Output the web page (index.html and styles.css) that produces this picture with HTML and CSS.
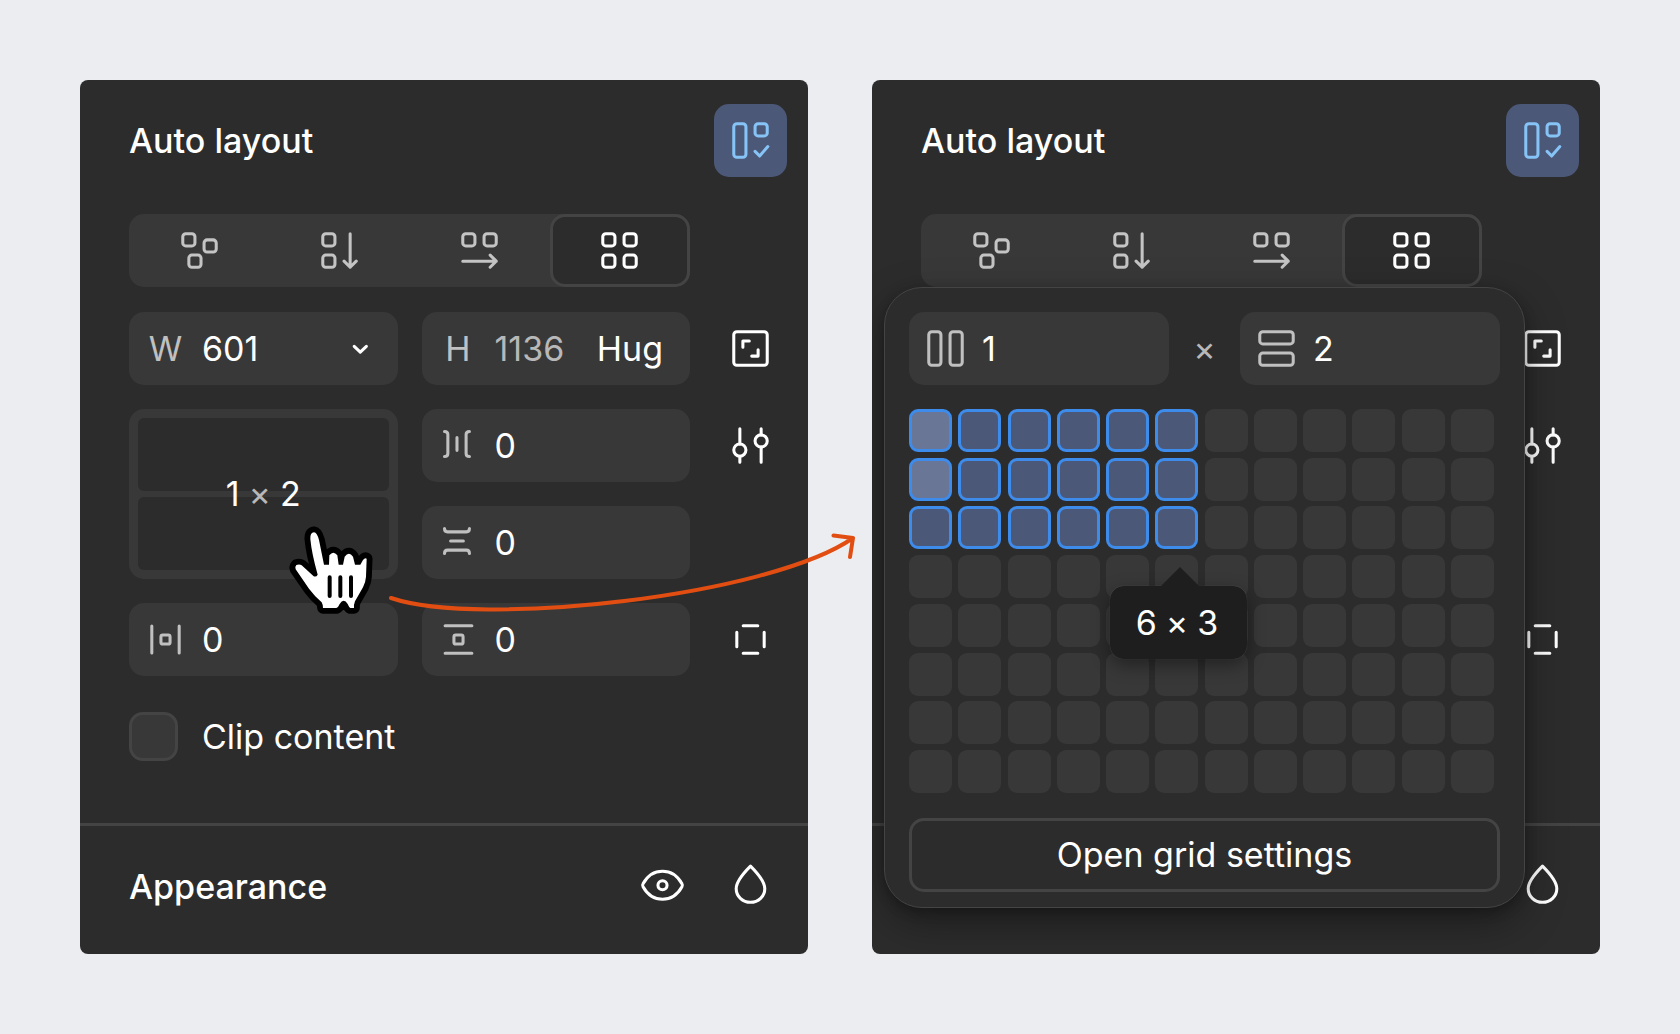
FILE: index.html
```html
<!DOCTYPE html>
<html lang="en">
<head>
    <meta charset="UTF-8">
    <meta name="viewport" content="width=device-width, initial-scale=1.0">
    <title>Auto layout</title>
    <link rel="stylesheet" href="styles.css">
</head>
<body>
    <svg class="sprite" aria-hidden="true">
        <symbol id="i-auto" viewBox="0 0 24 24"><rect x="6.5" y="6.5" width="4" height="11" rx="1"/><rect x="13.5" y="6.5" width="4" height="4" rx="1"/><path d="M13.5 15.6l1.5 1.5 2.7-3.1"/></symbol>
        <symbol id="i-free" viewBox="0 0 24 24"><rect x="6.5" y="6.5" width="4" height="4" rx="1"/><rect x="13.5" y="8.5" width="4" height="4" rx="1"/><rect x="8.5" y="13.5" width="4" height="4" rx="1"/></symbol>
        <symbol id="i-down" viewBox="0 0 24 24"><rect x="6.5" y="6.5" width="4" height="4" rx="1"/><rect x="6.5" y="13.5" width="4" height="4" rx="1"/><path d="M15.5 6.5v11M13.5 15.5l2 2 2-2"/></symbol>
        <symbol id="i-right" viewBox="0 0 24 24"><rect x="6.5" y="6.5" width="4" height="4" rx="1"/><rect x="13.5" y="6.5" width="4" height="4" rx="1"/><path d="M6.5 15.5h11M15.5 13.5l2 2-2 2"/></symbol>
        <symbol id="i-grid" viewBox="0 0 24 24"><rect x="6.5" y="6.5" width="4" height="4" rx="1"/><rect x="13.5" y="6.5" width="4" height="4" rx="1"/><rect x="6.5" y="13.5" width="4" height="4" rx="1"/><rect x="13.5" y="13.5" width="4" height="4" rx="1"/></symbol>
        <symbol id="i-chevron" viewBox="0 0 24 24"><path d="M9.6 11.3l2 1.9 2-1.9"/></symbol>
        <symbol id="i-ratio" viewBox="0 0 24 24"><rect x="6.5" y="6.5" width="11" height="11" rx="1"/><path d="M9.5 11.6V9.5h2.1M14.5 12.4v2.1h-2.1"/></symbol>
        <symbol id="i-sliders" viewBox="0 0 24 24"><circle cx="8.5" cy="13.5" r="2"/><circle cx="15.5" cy="10.5" r="2"/><path d="M8.5 6.5v5M8.5 15.5v2M15.5 6.5v2M15.5 12.5v5"/></symbol>
        <symbol id="i-gap-h" viewBox="0 0 24 24"><path d="M7.4 7.4c.7 0 1.1.4 1.1 1v6.2c0 .6-.4 1-1.1 1M11.5 9.4v4.2M15.6 7.4c-.7 0-1.1.4-1.1 1v6.2c0 .6.4 1 1.1 1"/></symbol>
        <symbol id="i-gap-v" viewBox="0 0 24 24"><path d="M7.4 7.4c0 .7.4 1.1 1 1.1h6.2c.6 0 1-.4 1-1.1M9.4 11.5h4.2M7.4 15.6c0-.7.4-1.1 1-1.1h6.2c.6 0 1 .4 1 1.1"/></symbol>
        <symbol id="i-pad-h" viewBox="0 0 24 24"><rect x="10.5" y="10.5" width="3" height="3" rx=".6"/><path d="M7.5 7.6v8.8M16.5 7.6v8.8"/></symbol>
        <symbol id="i-pad-v" viewBox="0 0 24 24"><rect x="10.5" y="10.5" width="3" height="3" rx=".6"/><path d="M7.6 7.5h8.8M7.6 16.5h8.8"/></symbol>
        <symbol id="i-sides" viewBox="0 0 24 24"><path d="M9.6 7.5h4.8M9.6 16.5h4.8M7.5 9.6v4.8M16.5 9.6v4.8"/></symbol>
        <symbol id="i-eye" viewBox="0 0 24 24"><path d="M5.6 12.1q-.3-.5 0-1C7.1 8.4 9.3 7 12 7s4.900 1.400 6.400 4.100q.3.500 0 1C16.900 14.800 14.700 16.200 12 16.200s-4.900-1.400-6.400-4.100z"/><circle cx="12" cy="11.6" r="1.5"/></symbol>
        <symbol id="i-drop" viewBox="0 0 24 24"><path d="M12 5.3C9.5 7.8 7.3 10.3 7.3 12.7a4.7 4.5 0 0 0 9.4 0C16.7 10.3 14.5 7.8 12 5.3z"/></symbol>
        <symbol id="i-cols" viewBox="0 0 24 24"><rect x="6.5" y="6.5" width="4" height="11" rx="1"/><rect x="13.5" y="6.5" width="4" height="11" rx="1"/></symbol>
        <symbol id="i-rows" viewBox="0 0 24 24"><rect x="6.5" y="6.5" width="11" height="4" rx="1"/><rect x="6.5" y="13.5" width="11" height="4" rx="1"/></symbol>
    </svg>

    <main class="stage">
        <section class="panel">
            <header class="panel-head">
                <h2>Auto layout</h2>
                <button class="icon-btn on" aria-label="Remove auto layout"><svg class="icon"><use href="#i-auto"/></svg></button>
            </header>
            <div class="controls">
                <div class="segments">
                    <button aria-label="Freeform"><svg class="icon"><use href="#i-free"/></svg></button>
                    <button aria-label="Vertical"><svg class="icon"><use href="#i-down"/></svg></button>
                    <button aria-label="Horizontal"><svg class="icon"><use href="#i-right"/></svg></button>
                    <button class="active" aria-label="Grid"><svg class="icon"><use href="#i-grid"/></svg></button>
                </div>

                <div class="field row-size">
                    <label class="prefix" for="width">W</label>
                    <input type="text" id="width" value="601">
                    <button class="chevron" aria-label="Width options"><svg class="icon"><use href="#i-chevron"/></svg></button>
                </div>
                <div class="field row-size">
                    <label class="prefix" for="height">H</label>
                    <input type="text" id="height" class="muted" value="1136">
                    <button class="mode">Hug</button>
                </div>
                <button class="icon-btn row-size side" aria-label="Lock aspect ratio"><svg class="icon"><use href="#i-ratio"/></svg></button>

                <button class="thumb" aria-label="Grid size 1 × 2">
                    <span class="track"></span>
                    <span class="track"></span>
                    <span class="dims"><span>1</span><span class="times">×</span><span>2</span></span>
                </button>
                <div class="field gap-h">
                    <label class="prefix" for="gap-h" aria-label="Horizontal gap"><svg class="icon"><use href="#i-gap-h"/></svg></label>
                    <input type="text" id="gap-h" value="0">
                </div>
                <button class="icon-btn row-gap side" aria-label="Auto layout settings"><svg class="icon"><use href="#i-sliders"/></svg></button>
                <div class="field gap-v">
                    <label class="prefix" for="gap-v" aria-label="Vertical gap"><svg class="icon"><use href="#i-gap-v"/></svg></label>
                    <input type="text" id="gap-v" value="0">
                </div>

                <div class="field row-pad">
                    <label class="prefix" for="pad-h" aria-label="Horizontal padding"><svg class="icon"><use href="#i-pad-h"/></svg></label>
                    <input type="text" id="pad-h" value="0">
                </div>
                <div class="field row-pad">
                    <label class="prefix" for="pad-v" aria-label="Vertical padding"><svg class="icon"><use href="#i-pad-v"/></svg></label>
                    <input type="text" id="pad-v" value="0">
                </div>
                <button class="icon-btn row-pad side" aria-label="Individual padding"><svg class="icon"><use href="#i-sides"/></svg></button>

                <label class="clip"><input type="checkbox">Clip content</label>
            </div>
            <footer class="panel-foot">
                <h2>Appearance</h2>
                <button class="icon-btn" aria-label="Visibility"><svg class="icon"><use href="#i-eye"/></svg></button>
                <button class="icon-btn" aria-label="Blend mode"><svg class="icon"><use href="#i-drop"/></svg></button>
            </footer>
        </section>

        <section class="panel">
            <header class="panel-head">
                <h2>Auto layout</h2>
                <button class="icon-btn on" aria-label="Remove auto layout"><svg class="icon"><use href="#i-auto"/></svg></button>
            </header>
            <div class="controls">
                <div class="segments">
                    <button aria-label="Freeform"><svg class="icon"><use href="#i-free"/></svg></button>
                    <button aria-label="Vertical"><svg class="icon"><use href="#i-down"/></svg></button>
                    <button aria-label="Horizontal"><svg class="icon"><use href="#i-right"/></svg></button>
                    <button class="active" aria-label="Grid"><svg class="icon"><use href="#i-grid"/></svg></button>
                </div>
                <button class="icon-btn row-size side" aria-label="Lock aspect ratio"><svg class="icon"><use href="#i-ratio"/></svg></button>
                <button class="icon-btn row-gap side" aria-label="Auto layout settings"><svg class="icon"><use href="#i-sliders"/></svg></button>
                <button class="icon-btn row-pad side" aria-label="Individual padding"><svg class="icon"><use href="#i-sides"/></svg></button>
            </div>
            <footer class="panel-foot">
                <button class="icon-btn" aria-label="Blend mode"><svg class="icon"><use href="#i-drop"/></svg></button>
            </footer>

            <div class="popover">
                <div class="counts">
                    <div class="field">
                        <label class="prefix" for="cols" aria-label="Columns"><svg class="icon"><use href="#i-cols"/></svg></label>
                        <input type="text" id="cols" value="1">
                    </div>
                    <span class="times">×</span>
                    <div class="field">
                        <label class="prefix" for="rows" aria-label="Rows"><svg class="icon"><use href="#i-rows"/></svg></label>
                        <input type="text" id="rows" value="2">
                    </div>
                </div>
                <div class="cells" id="cells"></div>
                <button class="settings">Open grid settings</button>
                <div class="tooltip"><span>6</span><span>×</span><span>3</span></div>
            </div>
        </section>

        <svg class="arrow" viewBox="0 0 480 90" aria-hidden="true">
            <path d="M11 68C100 98 390 66 473 8M453.5 5.5L473 8l-3 19"/>
        </svg>
        <svg class="hand" viewBox="505 135 255 270" aria-hidden="true">
            <path class="hand-shape" d="M583 157Q571 158 572 177Q576 220 594 284Q590 292 582 289L546 256Q540 252 530 255Q525 260 528 268L568 326Q586 350 606 367Q610 374 610 384H650Q656 382 660 372Q672 352 684 372Q688 382 692 384H703Q702 374 706 364L730 322Q738 306 739 290L741 236Q736 232 730 240L722 254H706L700 230Q688 212 675 230L670 254H657L653 226Q641 210 629 226L628 254H613L598 180Q592 158 583 157z"/>
            <path class="hand-lines" d="M630 292v56M662 292v56M694 292v56"/>
        </svg>
    </main>
    <script>
    const cells = document.getElementById('cells');
    for (let row = 1; row <= 8; row++) {
        for (let col = 1; col <= 12; col++) {
            const cell = document.createElement('button');
            cell.setAttribute('aria-label', col + ' × ' + row);
            if (col <= 6 && row <= 3) cell.classList.add('picked');
            if (col <= 1 && row <= 2) cell.classList.add('current');
            cells.appendChild(cell);
        }
    }
    </script>
</body>
</html>
```

FILE: styles.css
```css
* {
    box-sizing: border-box;
}
body {
    margin: 0;
    background: #ecedf1;
    color: #fff;
    font-family: Inter, "Liberation Sans", sans-serif;
    font-size: 34px;
    font-optical-sizing: none;
    line-height: 48px;
}
h2 {
    flex: 1;
    margin: 0;
    font-size: 34px;
    font-weight: 500;
}
button, input {
    margin: 0;
    padding: 0;
    border: none;
    background: none;
    color: inherit;
    font: inherit;
}
button {
    cursor: pointer;
}
.sprite {
    display: none;
}
.icon {
    display: block;
    flex: none;
    width: 73px;
    height: 73px;
    fill: none;
    stroke: currentColor;
    stroke-linecap: round;
    stroke-linejoin: round;
}
.stage {
    position: relative;
    display: flex;
    gap: 64px;
    padding: 80px;
}

/* panel */
.panel {
    position: relative;
    flex: 1;
    overflow: hidden;
    border-radius: 8px;
    background: #2c2c2c;
}
.panel-head, .panel-foot {
    display: flex;
    align-items: center;
    justify-content: flex-end;
    gap: 15px;
    padding: 24px 21px 1px 49px;
}
.panel-foot {
    padding-bottom: 31px;
    border-top: 3px solid #444;
}
.icon-btn {
    display: flex;
    align-items: center;
    justify-content: center;
    width: 73px;
    height: 73px;
    border-radius: 15px;
}
.icon-btn.on {
    background: #4c5877;
    color: #86c3f6;
}

/* controls */
.controls {
    display: grid;
    grid-template-columns: 1fr 1fr 73px;
    grid-template-rows: 74px repeat(5, 73px);
    gap: 24px;
    padding: 36px 21px 50px 49px;
}
.segments {
    grid-column: span 2;
    display: grid;
    grid-template-columns: repeat(4, 1fr);
    height: 73px;
    border-radius: 15px;
    background: #383838;
    color: #c4c4c4;
}
.segments button {
    display: flex;
    align-items: center;
    justify-content: center;
    height: 73px;
    border-radius: 15px;
}
.segments .active {
    border: 3px solid #444;
    background: #2c2c2c;
    color: #fff;
}
.side {
    grid-column: 3;
}
.row-size {
    grid-row: 2;
}
.row-gap {
    grid-row: 3;
}
.row-pad {
    grid-row: 5;
}
.gap-h {
    grid-row: 3;
    grid-column: 2;
}
.gap-v {
    grid-row: 4;
    grid-column: 2;
}
.field {
    display: flex;
    align-items: center;
    height: 73px;
    border-radius: 15px;
    background: #383838;
}
.field input {
    flex: 1;
    width: 0;
    min-width: 0;
    outline: none;
}
.prefix {
    flex: none;
    width: 73px;
    text-align: center;
    color: #c0c0c0;
}
.muted {
    color: #b8b8b8;
}
.mode {
    padding: 0 27px 0 8px;
}
.thumb {
    position: relative;
    grid-row: 3 / span 2;
    display: flex;
    flex-direction: column;
    gap: 6px;
    padding: 9px;
    border-radius: 15px;
    background: #383838;
}
.track {
    flex: 1;
    width: 100%;
    border-radius: 6px;
    background: #2c2c2c;
}
.dims {
    position: absolute;
    inset: 0;
    display: flex;
    align-items: center;
    justify-content: center;
    gap: 9px;
}
.times {
    color: #b8b8b8;
}
.clip {
    grid-row: 6;
    grid-column: span 2;
    display: flex;
    align-items: center;
    gap: 24px;
}
.clip input {
    appearance: none;
    width: 49px;
    height: 49px;
    border: 3px solid #444;
    border-radius: 14px;
    background: #383838;
}

/* grid picker */
.popover {
    position: absolute;
    top: 207px;
    left: 12px;
    right: 75px;
    padding: 24px 24px 15px;
    border: 1px solid #444;
    border-radius: 38px;
    background: #2c2c2c;
    box-shadow: 0 15px 40px rgba(0, 0, 0, 0.35), 0 4px 12px rgba(0, 0, 0, 0.25);
}
.counts {
    display: flex;
    align-items: center;
}
.counts .field {
    flex: 1;
}
.counts .times {
    width: 71px;
    text-align: center;
}
.cells {
    display: grid;
    grid-template-columns: repeat(12, 43px);
    grid-auto-rows: 43px;
    justify-content: space-between;
    align-content: space-between;
    height: 384px;
    margin: 24px 6px 25px 0;
}
.cells button {
    border-radius: 9px;
    background: #383838;
}
.cells .picked {
    border: 3px solid #3d8bea;
    background: #4c5877;
}
.cells .current {
    background: #6a7696;
}
.settings {
    width: 100%;
    height: 74px;
    border: 3px solid #444;
    border-radius: 15px;
}
.tooltip {
    position: absolute;
    top: 298px;
    left: 225px;
    display: flex;
    align-items: center;
    justify-content: center;
    gap: 9px;
    width: 137px;
    height: 73px;
    padding-right: 3px;
    border-radius: 14px;
    background: #1e1e1e;
    box-shadow: 0 6px 18px rgba(0, 0, 0, 0.4), 0 0 1px rgba(255, 255, 255, 0.3);
}
.tooltip::before {
    content: "";
    position: absolute;
    bottom: 100%;
    left: 50%;
    margin-left: -18px;
    border: 19px solid transparent;
    border-top: none;
    border-bottom-color: #1e1e1e;
}

/* drawn over both panels */
.arrow {
    position: absolute;
    top: 530px;
    left: 380px;
    width: 480px;
    height: 90px;
    fill: none;
    stroke: #e24e12;
    stroke-width: 4;
    stroke-linecap: round;
    stroke-linejoin: round;
    pointer-events: none;
}
.hand {
    position: absolute;
    top: 525px;
    left: 288px;
    width: 85px;
    height: 90px;
    pointer-events: none;
}
.hand-shape {
    fill: #fff;
    stroke: #000;
    stroke-width: 35;
    stroke-linejoin: round;
    paint-order: stroke;
}
.hand-lines {
    fill: none;
    stroke: #000;
    stroke-width: 12;
    stroke-linecap: round;
}
```
